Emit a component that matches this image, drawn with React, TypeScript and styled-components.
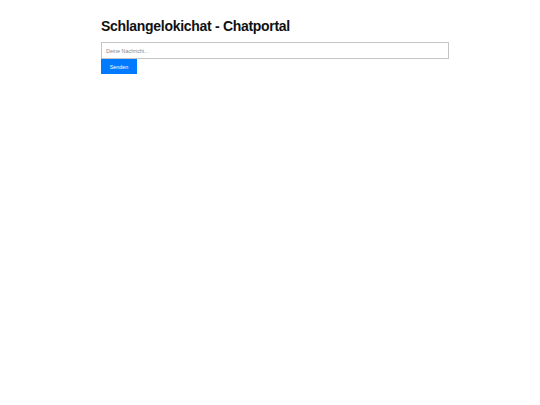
import styled, { createGlobalStyle } from "styled-components";

const GlobalStyle = createGlobalStyle`
  body {
    margin: 0;
    background: #ffffff;
    font-family: "Liberation Sans", Arial, sans-serif;
  }
`;

const Container = styled.div`
  width: 348px;
  margin-left: 101px;
  padding-top: 17px;
  display: flex;
  flex-direction: column;
`;

const Title = styled.h1`
  margin: 0 0 7px;
  font-size: 14px;
  line-height: 18px;
  font-weight: 700;
  letter-spacing: -0.3px;
  color: #111;
`;

const Form = styled.form`
  display: flex;
  flex-direction: column;
  align-items: flex-start;
`;

const MessageInput = styled.input`
  box-sizing: border-box;
  width: 348px;
  height: 17px;
  margin: 0;
  padding: 0 4px;
  border: 1px solid #c4c4c4;
  border-radius: 0;
  font-family: "Liberation Sans", Arial, sans-serif;
  font-size: 5.4px;
  color: #333;
  outline: none;

  &::placeholder {
    color: #8a8a8a;
  }
`;

const SendButton = styled.button`
  box-sizing: border-box;
  width: 36px;
  height: 15px;
  margin: 0;
  padding: 0;
  border: none;
  border-radius: 0;
  background: #007bff;
  color: #fff;
  font-family: "Liberation Sans", Arial, sans-serif;
  font-size: 5.4px;
  cursor: pointer;
`;

export default function App() {
  return (
    <>
      <GlobalStyle />
      <Container>
        <Title>Schlangelokichat - Chatportal</Title>
        <Form onSubmit={(e) => e.preventDefault()}>
          <MessageInput type="text" placeholder="Deine Nachricht..." />
          <SendButton type="submit">Senden</SendButton>
        </Form>
      </Container>
    </>
  );
}
